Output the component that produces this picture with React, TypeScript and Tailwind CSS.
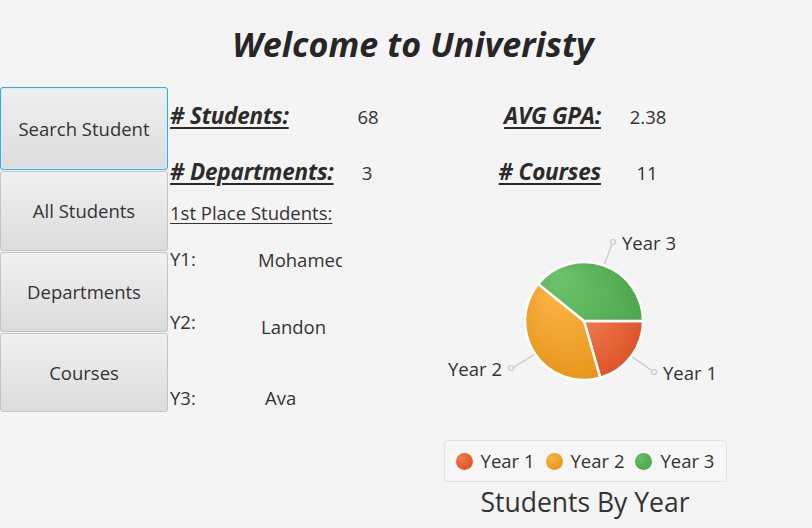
import React from "react";

// --- DATA ---
const NAV = [
  { label: "Search Student", h: "h-[83px]", focused: true },
  { label: "All Students", h: "h-[80px]", focused: false },
  { label: "Departments", h: "h-[80px]", focused: false },
  { label: "Courses", h: "h-[79px]", focused: false },
];

const WINNERS = [
  { year: "Y1:", name: "Mohamed", cls: "h-[63px] pl-[88px]", nameCls: "pt-[1px]" },
  { year: "Y2:", name: "Landon", cls: "h-[76px] pl-[91px]", nameCls: "pt-[5px]" },
  { year: "Y3:", name: "Ava", cls: "h-[30px] pl-[95px]", nameCls: "pt-[0px]" },
];

const SLICES = [
  { name: "Year 1", d: "M154 118 L213 118 A59 59 0 0 1 170.26 174.72 Z", fill: "url(#g1)", dot: "bg-[radial-gradient(circle_at_35%_30%,#f07a4a,#d9471d)]" },
  { name: "Year 2", d: "M154 118 L170.26 174.72 A59 59 0 0 1 108.15 80.87 Z", fill: "url(#g2)", dot: "bg-[radial-gradient(circle_at_35%_30%,#f8b23e,#e3900f)]" },
  { name: "Year 3", d: "M154 118 L108.15 80.87 A59 59 0 0 1 213 118 Z", fill: "url(#g3)", dot: "bg-[radial-gradient(circle_at_35%_30%,#66bf66,#449d44)]" },
];

const font = "font-['Open_Sans','Noto_Sans',sans-serif]";

function StatLabel({ children }: { children: React.ReactNode }) {
  return (
    <span className="text-[22.5px] font-bold italic underline decoration-[1.5px] underline-offset-[3px] text-[#2b2b2b] tracking-[-0.2px]">
      {children}
    </span>
  );
}

function PieChart() {
  return (
    <svg width="310" height="237" viewBox="0 0 310 237" className="block">
      <defs>
        <radialGradient id="g1" cx="154" cy="118" r="80" fx="140" fy="100" gradientUnits="userSpaceOnUse">
          <stop offset="0" stopColor="#f58a5c" />
          <stop offset="1" stopColor="#d8471c" />
        </radialGradient>
        <radialGradient id="g2" cx="154" cy="118" r="80" fx="120" fy="90" gradientUnits="userSpaceOnUse">
          <stop offset="0" stopColor="#fbb449" />
          <stop offset="1" stopColor="#e28f10" />
        </radialGradient>
        <radialGradient id="g3" cx="154" cy="118" r="80" fx="125" fy="70" gradientUnits="userSpaceOnUse">
          <stop offset="0" stopColor="#6cc36c" />
          <stop offset="1" stopColor="#469f46" />
        </radialGradient>
      </defs>

      {/* label lines */}
      <g stroke="#c8c8c8" strokeWidth="1.2" fill="#f4f4f4">
        <line x1="174" y1="62" x2="182" y2="41" />
        <circle cx="183" cy="39" r="2.5" />
        <line x1="105" y1="151" x2="84" y2="164" />
        <circle cx="81" cy="165" r="2.5" />
        <line x1="201" y1="153" x2="221" y2="167" />
        <circle cx="224" cy="169" r="2.5" />
      </g>

      {SLICES.map((s) => (
        <path key={s.name} d={s.d} fill={s.fill} stroke="#ffffff" strokeWidth="2.5" strokeLinejoin="round" />
      ))}

      <g fontFamily="'Open Sans','Noto Sans',sans-serif" fontSize="18.5" fill="#333333">
        <text x="192" y="47">Year 3</text>
        <text x="72" y="173" textAnchor="end">Year 2</text>
        <text x="233" y="177">Year 1</text>
      </g>
    </svg>
  );
}

export default function App() {
  return (
    <div className={`w-[812px] h-[528px] bg-[#f4f4f4] text-[#333333] overflow-hidden ${font}`}>
      {/* --- TITLE --- */}
      <div className="h-[87px] pt-[22px] text-center">
        <h1 className="text-[34px] leading-[44px] font-bold italic text-[#262626] tracking-[0.1px] pl-[14px]">
          Welcome to Univeristy
        </h1>
      </div>

      <div className="flex">
        {/* --- NAV BUTTONS --- */}
        <div className="flex flex-col gap-[1px] w-[168px] shrink-0">
          {NAV.map((b) => (
            <button
              key={b.label}
              className={`${b.h} w-full rounded-[3px] bg-gradient-to-b from-[#f0f0f0] to-[#dcdcdc] text-[18.5px] text-[#333333] ${
                b.focused ? "border border-[#3aa9e2] shadow-[inset_0_0_0_1px_#d6eefa]" : "border border-[#c4c4c4]"
              }`}
            >
              {b.label}
            </button>
          ))}
        </div>

        {/* --- CONTENT --- */}
        <div className="flex-1 pl-[2px]">
          {/* stats */}
          <div className="grid grid-cols-[177px_40px_214px_94px] grid-rows-[57px_56px] items-center">
            <div className="pt-[1px]"><StatLabel># Students:</StatLabel></div>
            <div className="text-[18.5px] text-center pt-[2px] pl-[2px]">68</div>
            <div className="text-right pt-[1px]"><StatLabel>AVG GPA:</StatLabel></div>
            <div className="text-[18.5px] text-center pt-[2px]">2.38</div>

            <div><StatLabel># Departments:</StatLabel></div>
            <div className="text-[18.5px] text-center pt-[1px] pr-[0px]">3</div>
            <div className="text-right"><StatLabel># Courses</StatLabel></div>
            <div className="text-[18.5px] text-center pt-[1px] pr-[2px]">11</div>
          </div>

          <div className="flex">
            {/* 1st place students */}
            <div className="w-[172px] shrink-0 overflow-hidden">
              <div className="h-[26px] text-[18.5px] leading-[26px] underline underline-offset-[3px] decoration-[1px] whitespace-nowrap">
                1st Place Students:
              </div>
              <div className="pt-[20px]">
                {WINNERS.map((w) => (
                  <div key={w.year} className={`flex text-[18.5px] leading-[26px] whitespace-nowrap ${w.cls} relative`}>
                    <span className="absolute left-0 top-0">{w.year}</span>
                    <span className={w.nameCls}>{w.name}</span>
                  </div>
                ))}
              </div>
            </div>

            {/* chart */}
            <div className="ml-[88px] mt-[3px] w-[310px] flex flex-col items-center">
              <PieChart />
              <div className="w-[283px] h-[42px] rounded-[4px] border border-[#e2e2e2] bg-[#f6f6f6] flex items-center justify-center gap-[11px]">
                {SLICES.map((s) => (
                  <div key={s.name} className="flex items-center gap-[8px]">
                    <span className={`w-[17px] h-[17px] rounded-full ${s.dot}`} />
                    <span className="text-[18.5px] leading-[24px]">{s.name}</span>
                  </div>
                ))}
              </div>
              <div className="mt-[3px] text-[26.5px] leading-[34px] text-[#333333]">Students By Year</div>
            </div>
          </div>
        </div>
      </div>
    </div>
  );
}
